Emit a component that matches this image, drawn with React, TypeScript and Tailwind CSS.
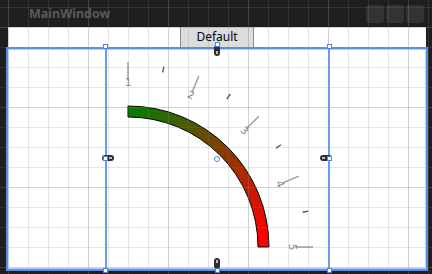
import React from "react";

const CX = 128;
const CY = 247;
const pt = (r: number, deg: number) => {
  const a = (deg * Math.PI) / 180;
  return [CX + r * Math.sin(a), CY - r * Math.cos(a)];
};

const majors = [0, 22.5, 45, 67.5, 90];
const minors = [11.25, 33.75, 56.25, 78.75];

function Gauge() {
  const R1 = 141;
  const R2 = 130;
  const path = `M ${CX} ${CY - R1} A ${R1} ${R1} 0 0 1 ${CX + R1} ${CY} L ${CX + R2} ${CY} A ${R2} ${R2} 0 0 0 ${CX} ${CY - R2} Z`;
  return (
    <svg width={224} height={223} viewBox="105 47 224 223" className="block -mt-px">
      <defs>
        <linearGradient id="g" gradientUnits="userSpaceOnUse" x1="128" y1="106" x2="262" y2="240">
          <stop offset="0" stopColor="#008000" />
          <stop offset="1" stopColor="#ff0000" />
        </linearGradient>
      </defs>
      <path d={path} fill="url(#g)" stroke="#000" strokeWidth={1} />
      {majors.map((a, i) => {
        const [x1, y1] = pt(167, a);
        const [x2, y2] = pt(185, a);
        const [lx, ly] = pt(165, a);
        return (
          <g key={a}>
            <line x1={x1} y1={y1} x2={x2} y2={y2} stroke="#9a9a9a" strokeWidth={1.4} />
            <text
              x={lx}
              y={ly}
              fontSize={10.5}
              fill="#8a8a8a"
              textAnchor="middle"
              dominantBaseline="central"
              fontFamily="'DejaVu Sans', sans-serif"
              transform={`rotate(${a} ${lx} ${ly})`}
            >
              {i + 1}
            </text>
          </g>
        );
      })}
      {minors.map((a) => {
        const [x1, y1] = pt(178, a);
        const [x2, y2] = pt(184, a);
        return <line key={a} x1={x1} y1={y1} x2={x2} y2={y2} stroke="#5a5a5a" strokeWidth={1.4} />;
      })}
    </svg>
  );
}

function GridOverlay() {
  const vx: number[] = [];
  for (let x = 8; x <= 428; x += 20) vx.push(x);
  const hy: number[] = [];
  for (let y = 7; y <= 274; y += 20) hy.push(y);
  return (
    <svg width={432} height={274} className="absolute left-0 top-0 pointer-events-none">
      {vx.map((x) => (
        <line
          key={"v" + x}
          x1={x + 0.5}
          y1={0}
          x2={x + 0.5}
          y2={274}
          stroke="#808080"
          strokeOpacity={(x - 8) % 80 === 0 ? 0.36 : 0.2}
        />
      ))}
      {hy.map((y) => (
        <line
          key={"h" + y}
          x1={0}
          y1={y + 0.5}
          x2={432}
          y2={y + 0.5}
          stroke="#808080"
          strokeOpacity={(y - 27) % 80 === 0 ? 0.36 : 0.2}
        />
      ))}
    </svg>
  );
}

function Handle({ className }: { className: string }) {
  return <div className={"absolute w-[5px] h-[5px] bg-white border border-[#4a84ee] " + className} />;
}

export default function App() {
  return (
    <div className="relative w-[432px] h-[274px] bg-[#1e1e1e] overflow-hidden" style={{ fontFamily: "'Noto Sans', 'Open Sans', sans-serif" }}>
      <div className="flex flex-col">
        <div className="h-[27px] flex items-center pl-[29px] pr-[8px]">
          <span className="text-[12.5px] font-bold text-[#5a5a5a] leading-none mt-[1px]">MainWindow</span>
          <div className="ml-auto flex gap-[2px] mt-[1px]">
            <div className="w-[18px] h-[18px] rounded-[3px] bg-[#333333]" />
            <div className="w-[18px] h-[18px] rounded-[3px] bg-[#333333]" />
            <div className="w-[18px] h-[18px] rounded-[3px] bg-[#333333]" />
          </div>
        </div>
        <div className="flex">
          <div className="w-[8px]" />
          <div className="w-[418px] h-[244px] bg-white flex flex-col">
            <div className="h-[21px] flex justify-center">
              <div className="w-[74px] h-[21px] bg-[#dddddd] border-x border-b border-[#8a8a8a] flex items-center justify-center text-[12px] text-black leading-none">
                Default
              </div>
            </div>
            <div className="flex justify-center">
              <Gauge />
            </div>
          </div>
        </div>
      </div>

      <GridOverlay />

      {/* selection of grid */}
      <div className="absolute left-[6px] top-[47px] w-[422px] h-[224px] border-2 border-[#5b8ee6] shadow-[inset_0_0_0_1px_#b8cff5] pointer-events-none" />
      {/* gauge bounds */}
      <div className="absolute left-[105px] top-[45px] w-[2px] h-[225px] bg-[#6b9bed]" />
      <div className="absolute left-[328px] top-[45px] w-[2px] h-[225px] bg-[#6b9bed]" />
      {/* render transform origin */}
      <div className="absolute left-[214px] top-[156px] w-[6px] h-[6px] rounded-full border border-[#4a84ee]" />

      {/* margin pills */}
      <div className="absolute left-[214px] top-[45px] w-[6px] h-[11px] rounded-[3px] bg-[#2e2e2e] flex items-end justify-center pb-[2px]">
        <div className="w-[2px] h-[3px] bg-[#bbbbbb]" />
      </div>
      <div className="absolute left-[214px] top-[258px] w-[6px] h-[11px] rounded-[3px] bg-[#2e2e2e] flex items-start justify-center pt-[2px]">
        <div className="w-[2px] h-[3px] bg-[#bbbbbb]" />
      </div>
      <div className="absolute left-[102px] top-[155px] w-[12px] h-[6px] rounded-[3px] bg-[#2e2e2e] flex items-center justify-end pr-[2px]">
        <div className="w-[3px] h-[2px] bg-[#bbbbbb]" />
      </div>
      <div className="absolute left-[320px] top-[155px] w-[12px] h-[6px] rounded-[3px] bg-[#2e2e2e] flex items-center justify-start pl-[2px]">
        <div className="w-[3px] h-[2px] bg-[#bbbbbb]" />
      </div>

      {/* handles */}
      <Handle className="left-[103px] top-[44px]" />
      <Handle className="left-[327px] top-[44px]" />
      <Handle className="left-[103px] top-[268px]" />
      <Handle className="left-[327px] top-[268px]" />
      <Handle className="left-[215px] top-[42px]" />
      <Handle className="left-[215px] top-[268px]" />
      <Handle className="left-[103px] top-[156px]" />
      <Handle className="left-[327px] top-[156px]" />
    </div>
  );
}
